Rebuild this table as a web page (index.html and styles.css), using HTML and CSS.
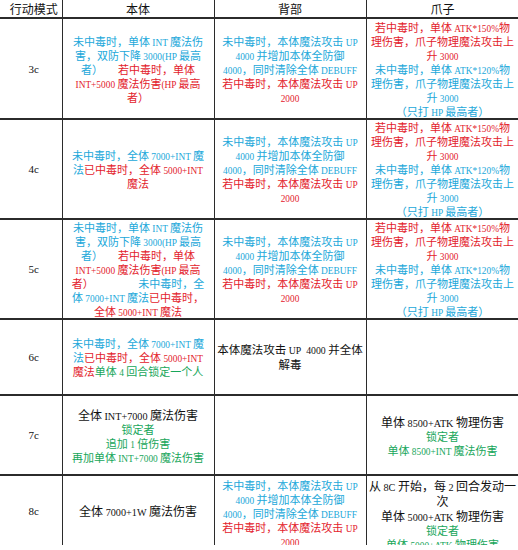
FILE: index.html
```html
<!DOCTYPE html>
<html lang="zh-CN">
<head>
<meta charset="utf-8">
<title>行动模式</title>
<link rel="stylesheet" href="styles.css">
</head>
<body>
<div class="frame">
<table class="grid">
<colgroup><col class="c1"><col class="c2"><col class="c3"><col class="c4"></colgroup>
<thead>
<tr class="hd"><th class="mode">行动模式</th><th>本体</th><th>背部</th><th>爪子</th></tr>
</thead>
<tbody>
<tr class="r3">
<td class="mode">3c</td>
<td class="sm">
<div class="ln b">未中毒时，单体<span class="n"> INT </span>魔法伤</div>
<div class="ln b">害，双防下降<span class="n"> 3000(HP </span>最高</div>
<div class="ln"><span class="b">者）</span>&nbsp;&nbsp;&nbsp;&nbsp;&nbsp;&nbsp;<span class="r">若中毒时，单体</span></div>
<div class="ln r"><span class="n">INT+5000 </span>魔法伤害<span class="n">(HP </span>最高</div>
<div class="ln r">者）</div>
</td>
<td class="sm">
<div class="ln b">未中毒时，本体魔法攻击<span class="n"> UP</span></div>
<div class="ln b"><span class="n">4000 </span>并增加本体全防御</div>
<div class="ln b"><span class="n">4000</span>，同时清除全体<span class="n"> DEBUFF</span></div>
<div class="ln r">若中毒时，本体魔法攻击<span class="n"> UP</span></div>
<div class="ln r"><span class="n">2000</span></div>
</td>
<td class="sm">
<div class="ln r">若中毒时，单体<span class="n"> ATK*150%</span>物</div>
<div class="ln r">理伤害，爪子物理魔法攻击上</div>
<div class="ln r">升<span class="n"> 3000</span></div>
<div class="ln b">未中毒时，单体<span class="n"> ATK*120%</span>物</div>
<div class="ln b">理伤害，爪子物理魔法攻击上</div>
<div class="ln b">升<span class="n"> 3000</span></div>
<div class="ln b">（只打<span class="n"> HP </span>最高者）</div>
</td>
</tr>
<tr class="r4">
<td class="mode">4c</td>
<td class="sm">
<div class="ln b">未中毒时，全体<span class="n"> 7000+INT </span>魔</div>
<div class="ln"><span class="b">法</span><span class="r">已中毒时，全体<span class="n"> 5000+INT</span></span></div>
<div class="ln r">魔法</div>
</td>
<td class="sm">
<div class="ln b">未中毒时，本体魔法攻击<span class="n"> UP</span></div>
<div class="ln b"><span class="n">4000 </span>并增加本体全防御</div>
<div class="ln b"><span class="n">4000</span>，同时清除全体<span class="n"> DEBUFF</span></div>
<div class="ln r">若中毒时，本体魔法攻击<span class="n"> UP</span></div>
<div class="ln r"><span class="n">2000</span></div>
</td>
<td class="sm">
<div class="ln r">若中毒时，单体<span class="n"> ATK*150%</span>物</div>
<div class="ln r">理伤害，爪子物理魔法攻击上</div>
<div class="ln r">升<span class="n"> 3000</span></div>
<div class="ln b">未中毒时，单体<span class="n"> ATK*120%</span>物</div>
<div class="ln b">理伤害，爪子物理魔法攻击上</div>
<div class="ln b">升<span class="n"> 3000</span></div>
<div class="ln b">（只打<span class="n"> HP </span>最高者）</div>
</td>
</tr>
<tr class="r5">
<td class="mode">5c</td>
<td class="sm">
<div class="ln b">未中毒时，单体<span class="n"> INT </span>魔法伤</div>
<div class="ln b">害，双防下降<span class="n"> 3000(HP </span>最高</div>
<div class="ln"><span class="b">者）</span>&nbsp;&nbsp;&nbsp;&nbsp;&nbsp;&nbsp;<span class="r">若中毒时，单体</span></div>
<div class="ln r"><span class="n">INT+5000 </span>魔法伤害<span class="n">(HP </span>最高</div>
<div class="ln"><span class="r">者）</span>&nbsp;&nbsp;&nbsp;&nbsp;&nbsp;&nbsp;&nbsp;&nbsp;&nbsp;&nbsp;&nbsp;&nbsp;&nbsp;&nbsp;&nbsp;&nbsp;&nbsp;&nbsp;<span class="b">未中毒时，全</span></div>
<div class="ln"><span class="b">体<span class="n"> 7000+INT </span>魔法</span><span class="r">已中毒时，</span></div>
<div class="ln r">全体<span class="n"> 5000+INT </span>魔法</div>
</td>
<td class="sm">
<div class="ln b">未中毒时，本体魔法攻击<span class="n"> UP</span></div>
<div class="ln b"><span class="n">4000 </span>并增加本体全防御</div>
<div class="ln b"><span class="n">4000</span>，同时清除全体<span class="n"> DEBUFF</span></div>
<div class="ln r">若中毒时，本体魔法攻击<span class="n"> UP</span></div>
<div class="ln r"><span class="n">2000</span></div>
</td>
<td class="sm">
<div class="ln r">若中毒时，单体<span class="n"> ATK*150%</span>物</div>
<div class="ln r">理伤害，爪子物理魔法攻击上</div>
<div class="ln r">升<span class="n"> 3000</span></div>
<div class="ln b">未中毒时，单体<span class="n"> ATK*120%</span>物</div>
<div class="ln b">理伤害，爪子物理魔法攻击上</div>
<div class="ln b">升<span class="n"> 3000</span></div>
<div class="ln b">（只打<span class="n"> HP </span>最高者）</div>
</td>
</tr>
<tr class="r6">
<td class="mode">6c</td>
<td class="sm">
<div class="ln b">未中毒时，全体<span class="n"> 7000+INT </span>魔</div>
<div class="ln"><span class="b">法</span><span class="r">已中毒时，全体<span class="n"> 5000+INT</span></span></div>
<div class="ln"><span class="r">魔法</span><span class="g">单体<span class="n"> 4 </span>回合锁定一个人</span></div>
</td>
<td class="lg mid">
<div class="ln k">本体魔法攻击<span class="n"> UP&nbsp; 4000 </span>并全体</div>
<div class="ln k">解毒</div>
</td>
<td></td>
</tr>
<tr class="r7">
<td class="mode">7c</td>
<td class="lg">
<div class="ln k">全体<span class="n"> INT+7000 </span>魔法伤害</div>
<div class="ln g">锁定者</div>
<div class="ln g">追加<span class="n"> 1 </span>倍伤害</div>
<div class="ln g">再加单体<span class="n"> INT+7000 </span>魔法伤害</div>
</td>
<td></td>
<td class="lg">
<div class="ln k">单体<span class="n"> 8500+ATK </span>物理伤害</div>
<div class="ln g">锁定者</div>
<div class="ln g">单体<span class="n"> 8500+INT </span>魔法伤害</div>
</td>
</tr>
<tr class="r8">
<td class="mode up">8c</td>
<td class="lg up">
<div class="ln k">全体<span class="n"> 7000+1W </span>魔法伤害</div>
</td>
<td class="sm top">
<div class="ln b">未中毒时，本体魔法攻击<span class="n"> UP</span></div>
<div class="ln b"><span class="n">4000 </span>并增加本体全防御</div>
<div class="ln b"><span class="n">4000</span>，同时清除全体<span class="n"> DEBUFF</span></div>
<div class="ln r">若中毒时，本体魔法攻击<span class="n"> UP</span></div>
<div class="ln r"><span class="n">2000</span></div>
</td>
<td class="lg top">
<div class="ln k">从<span class="n"> 8C </span>开始，每<span class="n"> 2 </span>回合发动一</div>
<div class="ln k">次</div>
<div class="ln k">单体<span class="n"> 5000+ATK </span>物理伤害</div>
<div class="ln g">锁定者</div>
<div class="ln g">单体<span class="n"> 5000+ATK </span>物理伤害</div>
</td>
</tr>
</tbody>
</table>
</div>
</body>
</html>
```
FILE: styles.css
```css
html, body {
  margin: 0;
  padding: 0;
  background: #ffffff;
}

.frame {
  width: 518px;
  height: 545px;
  overflow: hidden;
}

.grid {
  border-collapse: collapse;
  table-layout: fixed;
  width: 519px;
  font-family: "Noto Sans CJK SC", sans-serif;
  color: #111;
}

.c1 { width: 62px; }
.c2 { width: 152px; }
.c3 { width: 152px; }
.c4 { width: 153px; }

th, td {
  border-right: 1px solid #2b2b2b;
  border-bottom: 2px solid #2b2b2b;
  padding: 0;
  text-align: center;
  vertical-align: middle;
  white-space: nowrap;
  overflow: hidden;
}

th {
  font-weight: normal;
  font-size: 12px;
  line-height: 14px;
  height: 17px;
}

.ln {
  height: 14px;
  line-height: 14px;
  font-size: 11px;
}

.ln.k {
  height: 15px;
  line-height: 15px;
  font-size: 12px;
}

.mid .ln.k {
  font-size: 11.5px;
}

.n {
  font-family: "Liberation Serif", serif;
  font-size: 0.85em;
  line-height: 1;
}

.mode {
  padding-left: 6px;
  font-family: "Liberation Serif", serif;
  font-size: 11px;
}

th.mode {
  font-family: "Noto Sans CJK SC", sans-serif;
  font-size: 12px;
}

.top {
  vertical-align: top;
  padding-top: 2px;
}

.up {
  padding-bottom: 6px;
}

.b { color: #22a8da; }
.r { color: #e3222c; }
.g { color: #17a65a; }
.k { color: #111111; }

.r3 { height: 101px; }
.r4 { height: 99px; }
.r5 { height: 100px; }
.r6 { height: 76px; }
.r7 { height: 80px; }
.r8 { height: 76px; }
```
